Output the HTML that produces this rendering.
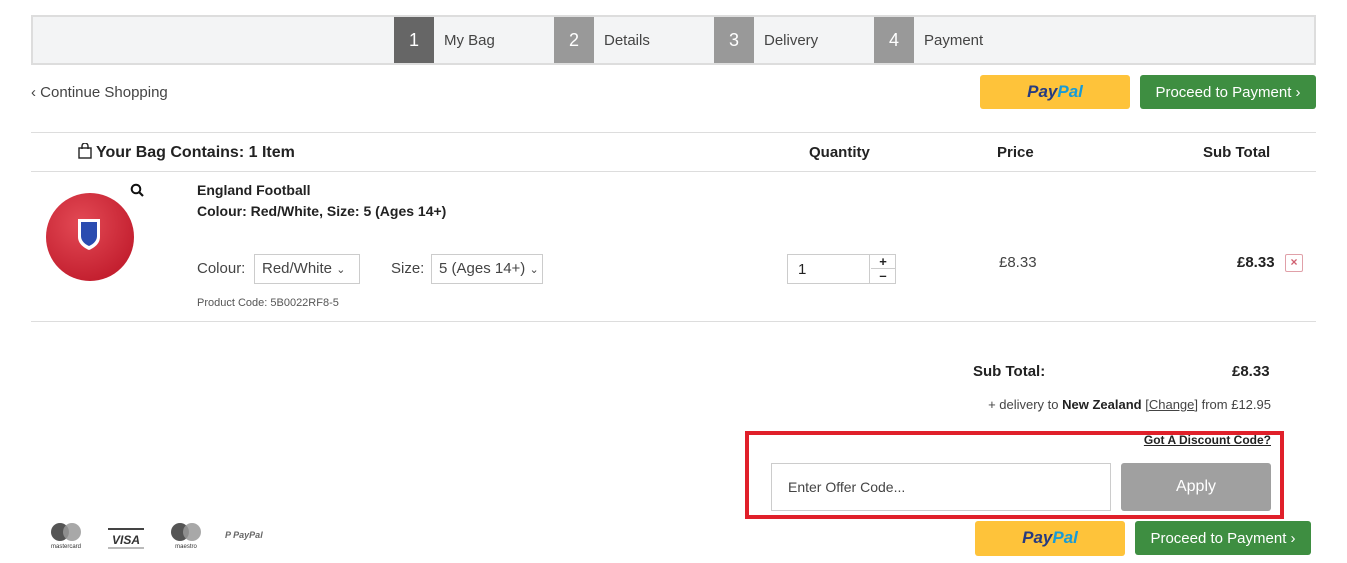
<!DOCTYPE html>
<html><head><meta charset="utf-8"><style>
*{box-sizing:border-box;margin:0;padding:0}
body{width:1347px;height:563px;background:#fff;font-family:"Liberation Sans",sans-serif;color:#222;position:relative;overflow:hidden}
.a{position:absolute}
.steps{left:31px;top:15px;width:1285px;height:50px;background:#f3f4f5;border:2px solid #ddd}
.sn{position:absolute;top:0;width:40px;height:46px;color:#fff;font-size:18px;text-align:center;line-height:46px}
.sl{position:absolute;top:0;line-height:48px;font-size:15px;color:#444}
.btnpp{background:#fec33a;border-radius:3px;text-align:center;font-weight:bold;font-style:italic;font-size:17px;line-height:34px}
.btng{background:#3e8e41;color:#fff;border-radius:3px;text-align:center;font-size:15px;line-height:34px}
.hr{height:1px;background:#ddd;left:31px;width:1285px}
.b{font-weight:bold}
.sel{border:1px solid #ccc;height:30px;font-size:15px;color:#444;line-height:28px;padding-left:7px;background:#fff}
</style></head><body>
<div class="a steps">
 <div class="sn" style="left:361px;background:#666">1</div><div class="sl" style="left:411px">My Bag</div>
 <div class="sn" style="left:521px;background:#999">2</div><div class="sl" style="left:571px">Details</div>
 <div class="sn" style="left:681px;background:#999">3</div><div class="sl" style="left:731px">Delivery</div>
 <div class="sn" style="left:841px;background:#999">4</div><div class="sl" style="left:891px">Payment</div>
</div>
<div class="a" style="left:31px;top:84px;font-size:15px;color:#444">‹ Continue Shopping</div>
<div class="a btnpp" style="left:980px;top:75px;width:150px;height:34px"><span style="color:#253b80">Pay</span><span style="color:#179bd7">Pal</span></div>
<div class="a btng" style="left:1140px;top:75px;width:176px;height:34px;line-height:35px">Proceed to Payment ›</div>
<div class="a hr" style="top:132px"></div>
<svg class="a" style="left:78px;top:143px" width="14" height="16" viewBox="0 0 14 16"><rect x="1" y="5" width="12" height="10" fill="none" stroke="#222" stroke-width="1.4"/><path d="M4 6V3a3 3 0 0 1 6 0v3" fill="none" stroke="#222" stroke-width="1.4"/></svg>
<div class="a b" style="left:96px;top:144px;font-size:16px">Your Bag Contains: 1 Item</div>
<div class="a b" style="left:809px;top:144px;font-size:15px">Quantity</div>
<div class="a b" style="left:997px;top:144px;font-size:15px">Price</div>
<div class="a b" style="left:1203px;top:144px;font-size:15px">Sub Total</div>
<div class="a hr" style="top:171px"></div>
<svg class="a" style="left:44px;top:191px" width="92" height="92" viewBox="0 0 92 92"><defs><radialGradient id="g" cx="40%" cy="35%" r="65%"><stop offset="0" stop-color="#e34a55"/><stop offset="1" stop-color="#c42030"/></radialGradient></defs><circle cx="46" cy="46" r="44" fill="url(#g)"/><path d="M34 28h22v18c0 9-11 13-11 13s-11-4-11-13z" fill="#fff"/><path d="M37 31h16v14c0 7-8 10-8 10s-8-3-8-10z" fill="#2a4cb0"/></svg>
<svg class="a" style="left:130px;top:183px" width="14" height="14" viewBox="0 0 14 14"><circle cx="6" cy="6" r="4.3" fill="none" stroke="#111" stroke-width="2"/><path d="M9 9l4 4" stroke="#111" stroke-width="2.2"/></svg>
<div class="a b" style="left:197px;top:182px;font-size:14px">England Football</div>
<div class="a b" style="left:197px;top:203px;font-size:14px">Colour: Red/White, Size: 5 (Ages 14+)</div>
<div class="a" style="left:197px;top:260px;font-size:15px;color:#444">Colour:</div>
<div class="a sel" style="left:254px;top:254px;width:106px">Red/White <span style="font-size:11px">&#8964;</span></div>
<div class="a" style="left:391px;top:260px;font-size:15px;color:#444">Size:</div>
<div class="a sel" style="left:431px;top:254px;width:112px">5 (Ages 14+) <span style="font-size:11px">&#8964;</span></div>
<div class="a" style="left:197px;top:297px;font-size:11px;color:#555">Product Code: 5B0022RF8-5</div>
<div class="a" style="left:787px;top:254px;width:109px;height:30px;border:1px solid #ccc"><div class="a" style="left:0;top:0;width:82px;height:28px;border-right:1px solid #ccc;padding-left:10px;line-height:30px;font-size:15px">1</div><div class="a b" style="left:83px;top:0;width:24px;height:14px;text-align:center;font-size:13px;line-height:14px;border-bottom:1px solid #ccc">+</div><div class="a b" style="left:83px;top:14px;width:24px;height:14px;text-align:center;font-size:13px;line-height:13px">–</div></div>
<div class="a" style="left:999px;top:254px;font-size:15px;color:#444">£8.33</div>
<div class="a b" style="left:1237px;top:254px;font-size:15px">£8.33</div>
<div class="a" style="left:1285px;top:254px;width:18px;height:18px;border:1.5px solid #e0a0a8;border-radius:2px;color:#d06070;font-size:12px;text-align:center;line-height:15px;font-weight:bold">×</div>
<div class="a hr" style="top:321px"></div>
<div class="a b" style="left:973px;top:363px;font-size:15px">Sub Total:</div>
<div class="a b" style="left:1232px;top:363px;font-size:15px">£8.33</div>
<div class="a" style="right:76px;top:397px;font-size:13px;color:#444;white-space:nowrap">+ delivery to <b style="color:#222">New Zealand</b> [<u>Change</u>] from £12.95</div>
<div class="a" style="left:745px;top:431px;width:539px;height:88px;border:4px solid #e0202a"></div>
<div class="a b" style="right:76px;top:433px;font-size:12px;text-decoration:underline;white-space:nowrap">Got A Discount Code?</div>
<div class="a" style="left:771px;top:463px;width:340px;height:48px;border:1px solid #ccc;padding-left:16px;line-height:46px;font-size:14px;color:#444">Enter Offer Code...</div>
<div class="a" style="left:1121px;top:463px;width:150px;height:48px;background:#a0a0a0;border-radius:3px;color:#fff;text-align:center;line-height:48px;font-size:16px">Apply</div>
<div class="a btnpp" style="left:975px;top:521px;width:150px;height:35px"><span style="color:#253b80">Pay</span><span style="color:#179bd7">Pal</span></div>
<div class="a btng" style="left:1135px;top:521px;width:176px;height:34px;line-height:35px">Proceed to Payment ›</div>
<svg class="a" style="left:45px;top:518px" width="230" height="34" viewBox="0 0 230 34"><circle cx="15" cy="14" r="9" fill="#555"/><circle cx="27" cy="14" r="9" fill="#999" opacity=".85"/><text x="21" y="30" font-size="6" text-anchor="middle" fill="#333" font-family="Liberation Sans">mastercard</text><rect x="63" y="10" width="36" height="2" fill="#444"/><text x="81" y="26" font-size="12" font-weight="bold" font-style="italic" text-anchor="middle" fill="#333" font-family="Liberation Sans">VISA</text><rect x="63" y="29" width="36" height="2" fill="#bbb"/><circle cx="135" cy="14" r="9" fill="#555"/><circle cx="147" cy="14" r="9" fill="#999" opacity=".85"/><text x="141" y="30" font-size="6" text-anchor="middle" fill="#333" font-family="Liberation Sans">maestro</text><text x="180" y="20" font-size="9" font-weight="bold" font-style="italic" fill="#666" font-family="Liberation Sans">P PayPal</text></svg>
</body></html>
